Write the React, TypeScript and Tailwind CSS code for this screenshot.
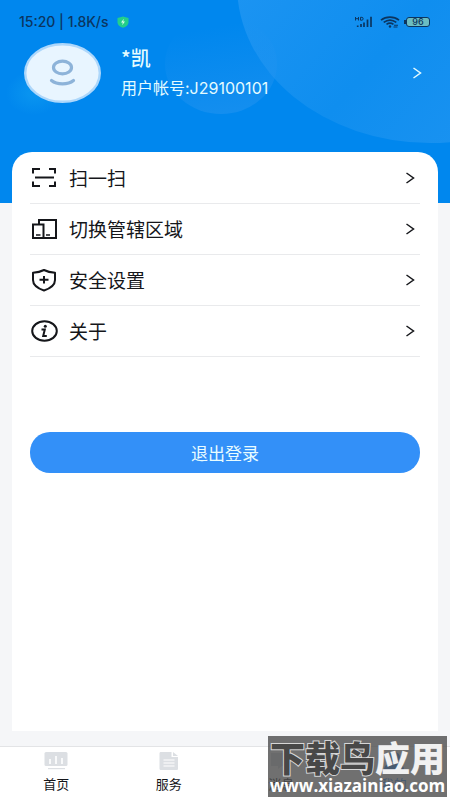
import type { ReactNode } from 'react';

type MenuItem = {
  id: string;
  label: string;
  icon: ReactNode;
};

type TabItem = {
  id: string;
  label: string;
  icon: ReactNode;
  active?: boolean;
};

function ScanIcon() {
  return (
    <svg aria-hidden="true" className="h-6 w-7" fill="none" stroke="#15161a" strokeWidth="2" viewBox="0 0 28 24">
      <path d="M3 7.500V3h7M19 3h6v4.500M3 15.500V20h7M19 20h6v-4.500" />
      <path d="M5 11.500h19" />
    </svg>
  );
}

function RegionIcon() {
  return (
    <svg aria-hidden="true" className="h-6 w-7" fill="none" stroke="#15161a" strokeWidth="2" viewBox="0 0 28 24">
      <path d="M9 7V3h17v18H3V7.500h10.500V21" />
      <path d="M6 18h4.500M16 18h4" strokeWidth="1.600" />
    </svg>
  );
}

function ShieldIcon() {
  return (
    <svg aria-hidden="true" className="h-6 w-7" fill="none" stroke="#15161a" strokeWidth="2" viewBox="0 0 28 24">
      <path d="M14 2C10.500 3.800 7 4.500 3 4.800V12c0 5 5 8.500 11 10.500C20 20.500 25 17 25 12V4.800C21 4.500 17.500 3.800 14 2Z" strokeLinejoin="round" />
      <path d="M9.500 11.800h9M14 8v7.600" />
    </svg>
  );
}

function InfoIcon() {
  return (
    <svg aria-hidden="true" className="h-6 w-7" fill="none" stroke="#15161a" strokeWidth="2" viewBox="0 0 28 24">
      <ellipse cx="14.500" cy="12" rx="12.300" ry="9.700" />
      <path d="M11.500 10.500h3.300l-1.600 6.500h3.600" />
      <circle cx="15.300" cy="7.200" fill="#15161a" r="1.500" stroke="none" />
    </svg>
  );
}

function Chevron() {
  return (
    <svg aria-hidden="true" className="h-3 w-[10px]" fill="none" stroke="currentColor" strokeWidth="1.500" viewBox="0 0 10 12">
      <path d="m1.500 1 7 5-7 5" />
    </svg>
  );
}

const menuItems: MenuItem[] = [
  { id: 'scan', label: '扫一扫', icon: <ScanIcon /> },
  { id: 'region', label: '切换管辖区域', icon: <RegionIcon /> },
  { id: 'security', label: '安全设置', icon: <ShieldIcon /> },
  { id: 'about', label: '关于', icon: <InfoIcon /> }
];

const tabItems: TabItem[] = [
  {
    id: 'home',
    label: '首页',
    icon: (
      <svg aria-hidden="true" className="h-5 w-6" fill="#dcdfe3" viewBox="0 0 24 20">
        <rect height="14" rx="1.500" width="23" x="0.500" y="1" />
        <path d="M4 17h17v1.200H4z" />
        <path d="M6 8v5M12 5v8M18 7v6" stroke="#fff" strokeWidth="1.600" />
      </svg>
    )
  },
  {
    id: 'service',
    label: '服务',
    icon: (
      <svg aria-hidden="true" className="h-5 w-6" fill="#dcdfe3" viewBox="0 0 24 20">
        <path d="M4 1h10.500v5H21v11.500c0 1-.5 1.500-1.500 1.500h-15C3 19 2.500 18.500 2.500 17.500v-15C2.500 1.500 3 1 4 1ZM16 1l5 4h-5Z" />
        <path d="M6.500 9h11M6.500 12h11M6.500 15h11" stroke="#fff" strokeWidth="1.200" />
      </svg>
    )
  },
  {
    id: 'message',
    label: '消息',
    icon: (
      <svg aria-hidden="true" className="h-5 w-6" fill="#dcdfe3" viewBox="0 0 24 20">
        <path d="M2 2h20v13H13l-4 3v-3H2Z" />
      </svg>
    )
  },
  {
    id: 'mine',
    label: '我的',
    active: true,
    icon: (
      <svg aria-hidden="true" className="h-5 w-6" fill="#3390f8" viewBox="0 0 24 20">
        <ellipse cx="12" cy="6" rx="6" ry="5" />
        <path d="M2 19c0-5 4-7 10-7s10 2 10 7Z" />
      </svg>
    )
  }
];

function StatusBar() {
  return (
    <div className="flex h-[43px] items-center justify-between pr-5 pl-[19px] text-[#0b3560]">
      <div className="flex items-center gap-2 font-['Inter','Liberation_Sans',sans-serif] text-sm leading-4 font-medium">
        <span>15:20 | 1.8K/s</span>
        <svg aria-hidden="true" className="h-3 w-3" viewBox="0 0 12 12">
          <path d="M6 .5 11.500 2v4.500C11.500 9 9 10.800 6 11.800 3 10.800.5 9 .5 6.500V2Z" fill="#22cf8b" />
          <path d="M6.800 2.800 4 6.500h1.800L5.200 9.200 8 5.500H6.200Z" fill="#d9ffe9" />
        </svg>
      </div>
      <div className="flex items-center gap-2">
        <svg aria-hidden="true" className="h-3 w-[18px]" fill="none" stroke="currentColor" viewBox="1 0 18 12">
          <path d="M2.500 1v3.500M5.500 1v3.500M2.500 2.700h3M7.500 1.300v2.900H9c1.500 0 1.500-2.900 0-2.900Z" />
          <path d="M4.700 9.500V11M8 8v3M11 6.500V11M14.500 3.500V11M18 .8V11" strokeWidth="1.700" />
        </svg>
        <svg aria-hidden="true" className="h-3 w-5" fill="none" stroke="currentColor" strokeWidth="1.700" viewBox="0 0 20 12">
          <path d="M1 4.200C6 .2 14 .2 19 4.200M3.700 6.400c4-3 8.600-3 12.600 0M6.500 8.400c2.300-1.600 4.700-1.600 7 0" />
          <circle cx="10" cy="10.500" fill="currentColor" r="1.200" stroke="none" />
          <path d="M14 9.200h4M13.500 11h4" strokeWidth="1.100" />
        </svg>
        <div className="-ml-1 flex items-center">
          <span className="h-1 w-[2px] bg-[#0b3560]" />
          <span className="flex h-[10px] w-6 items-center justify-center rounded-[3px] border border-[#0b3560] bg-[#6cbdc2] font-['Inter','Liberation_Sans',sans-serif] text-[9px] leading-none font-medium">
            96
          </span>
        </div>
      </div>
    </div>
  );
}

function HeaderBackdrop() {
  return (
    <svg aria-hidden="true" className="absolute inset-0 h-full w-full" preserveAspectRatio="none" viewBox="0 0 450 203">
      <defs>
        <linearGradient id="bubble" x1="0.300" x2="0.500" y1="0" y2="1">
          <stop offset="0.150" stopColor="#2494f0" stopOpacity="0" />
          <stop offset="1" stopColor="#2494f0" stopOpacity="0.550" />
        </linearGradient>
        <radialGradient id="glow">
          <stop offset="0.200" stopColor="#0a96f0" stopOpacity="0.800" />
          <stop offset="1" stopColor="#0a96f0" stopOpacity="0" />
        </radialGradient>
        <linearGradient id="planet" x1="0" x2="0.700" y1="0.500" y2="1">
          <stop offset="0" stopColor="#1c94f2" />
          <stop offset="0.500" stopColor="#0f8eef" />
          <stop offset="1" stopColor="#1c93f1" />
        </linearGradient>
      </defs>
      <ellipse cx="430" cy="-15" fill="url(#planet)" rx="193" ry="158" />
      <ellipse cx="221" cy="64" fill="url(#bubble)" rx="56" ry="50" />
      <ellipse cx="34" cy="93" fill="url(#glow)" rx="28" ry="22" />
    </svg>
  );
}

function ProfileHeader() {
  return (
    <header className="relative h-[203px] shrink-0 overflow-hidden bg-[#0087ee]">
      <HeaderBackdrop />
      <div className="relative">
        <StatusBar />
        <button className="flex w-full items-center pr-7 pl-6 text-left text-[#e4fbff]" type="button">
          <svg aria-hidden="true" className="h-[60px] w-[77px] shrink-0" fill="none" viewBox="0 0 77 60">
            <ellipse cx="38.500" cy="30" fill="#e8f5ff" rx="37.300" ry="28.800" stroke="#add7fb" strokeWidth="2.400" />
            <ellipse cx="38.500" cy="24.500" rx="9" ry="6.300" stroke="#8db3d9" strokeWidth="3.200" />
            <path d="M27.500 37.500c5.500 4.500 16.500 4.500 22 0" stroke="#8db3d9" strokeLinecap="round" strokeWidth="3.200" />
          </svg>
          <span className="ml-5 flex flex-1 flex-col gap-2 pb-[2px]">
            <span className="text-xl leading-6 font-medium">*凯</span>
            <span className="font-['Inter','Noto_Sans_CJK_SC',sans-serif] text-base leading-5">用户帐号:J29100101</span>
          </span>
          <Chevron />
        </button>
      </div>
    </header>
  );
}

function MenuRow({ item }: { item: MenuItem }) {
  return (
    <li className="border-b border-[#e9eaec]">
      <button className="flex h-[50px] w-full items-center pr-[5px] text-left text-[#15161a]" type="button">
        {item.icon}
        <span className="ml-[11px] flex-1 text-[19px] leading-6">{item.label}</span>
        <Chevron />
      </button>
    </li>
  );
}

function TabBar() {
  return (
    <nav className="grid h-[54px] shrink-0 grid-cols-4 border-t border-[#e3e4e6] bg-white">
      {tabItems.map((tab) => (
        <a
          aria-current={tab.active ? 'page' : undefined}
          className={`flex flex-col items-center gap-[3px] pt-1 text-[13px] leading-5 ${tab.active ? 'text-[#3390f8]' : 'text-[#15161a]'}`}
          href={`#${tab.id}`}
          key={tab.id}
        >
          {tab.icon}
          <span>{tab.label}</span>
        </a>
      ))}
    </nav>
  );
}

function Watermark() {
  return (
    <div className="pointer-events-none absolute right-[3px] bottom-[3px] flex h-[61px] w-[179px] flex-col items-center bg-[#4c4c4c]/80 whitespace-nowrap">
      <div className="text-[35px] leading-[42px] font-black text-white/90">
        <span className="text-[#484848] [paint-order:stroke_fill] [-webkit-text-stroke:2px_#d6d6d6]">下载鸟</span>
        <span>应用</span>
      </div>
      <div className="font-['Open_Sans','Noto_Sans',sans-serif] text-[17px] leading-4 font-bold text-white">www.xiazainiao.com</div>
    </div>
  );
}

export default function App() {
  return (
    <div className="relative flex min-h-screen flex-col bg-[#f5f6f8] font-['Noto_Sans_CJK_SC',sans-serif]" lang="zh-CN">
      <ProfileHeader />
      <main className="relative mx-3 -mt-[51px] mb-[15px] flex-1 rounded-t-[20px] bg-white px-[18px]">
        <ul className="pt-px">
          {menuItems.map((item) => (
            <MenuRow item={item} key={item.id} />
          ))}
        </ul>
        <button className="mt-[75px] h-[41px] w-full rounded-[20px] bg-[#3390f8] text-[17px] leading-6 text-[#e9fcff]" type="button">
          退出登录
        </button>
      </main>
      <TabBar />
      <Watermark />
    </div>
  );
}
